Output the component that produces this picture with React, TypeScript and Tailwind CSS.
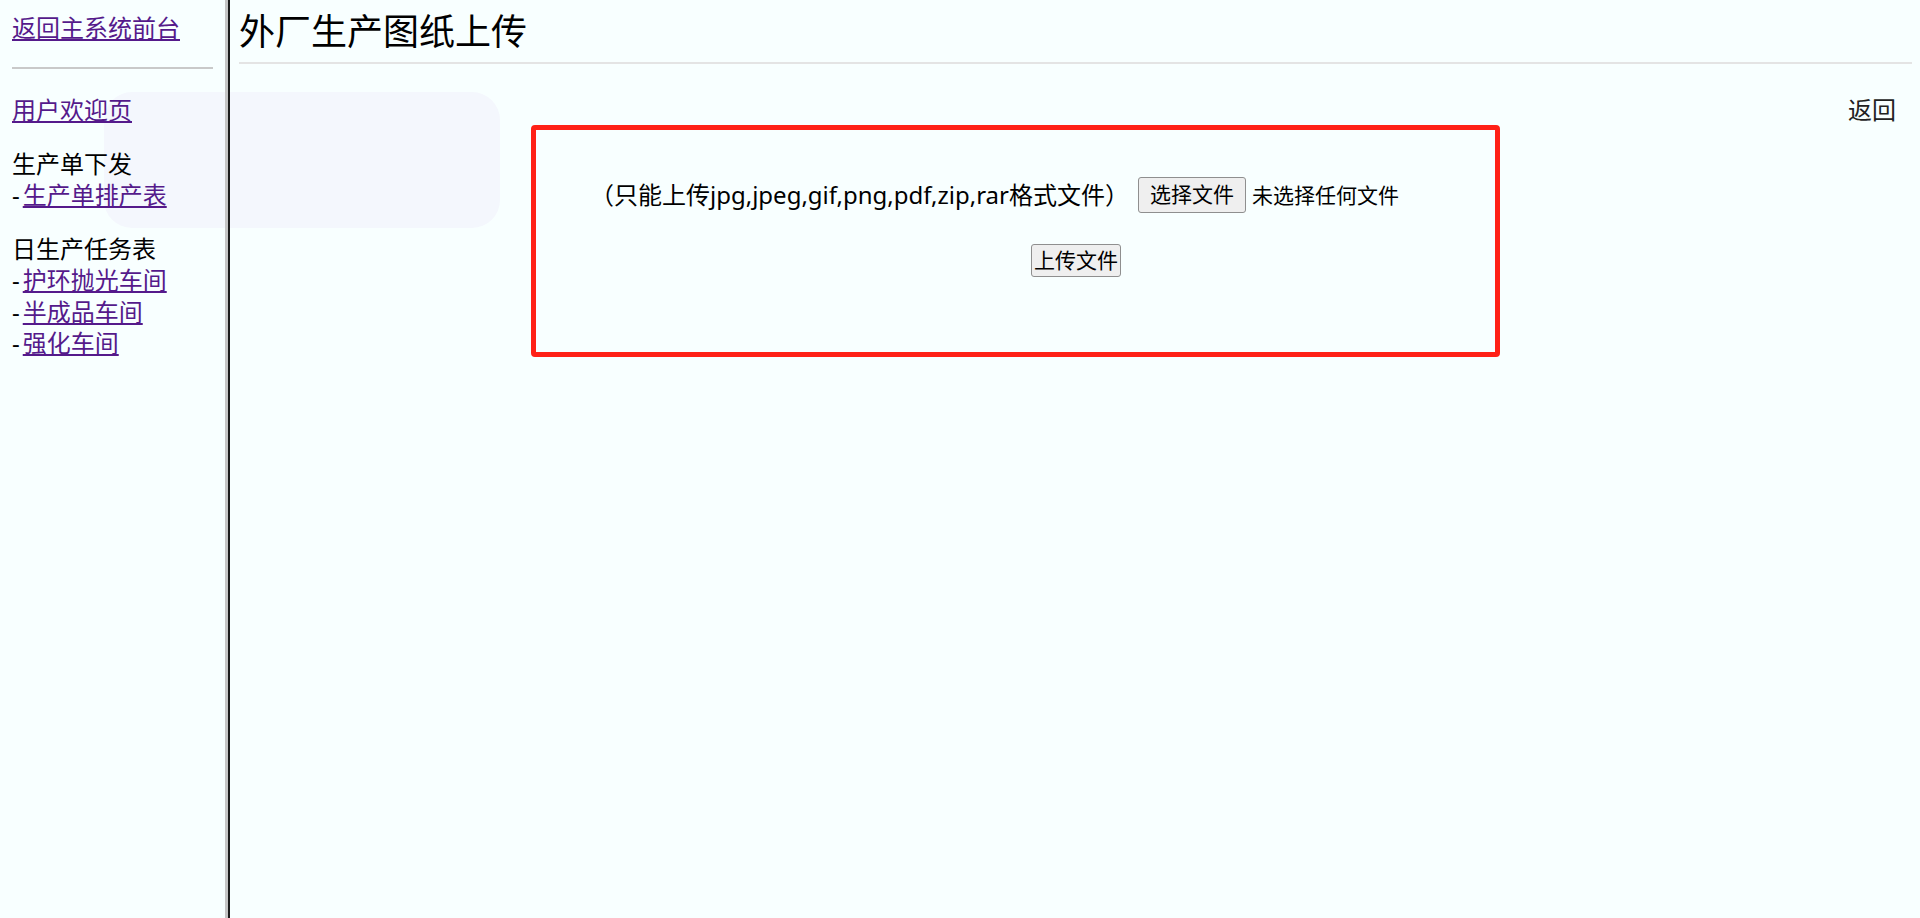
const Watermark = () => {
  return (
    <div className="pointer-events-none absolute left-[104px] top-[92px] h-[136px] w-[396px] rounded-[28px] bg-[#f4f7fd]" />
  )
}

const Sidebar = () => {
  const linkClass = 'text-[#551a8b] underline'
  const subLink = 'ml-[3px] text-[#551a8b] underline'
  return (
    <aside className="relative w-[225px] shrink-0 px-3 pt-3 text-[24px] leading-[31.5px]">
      <div>
        <a href="#" className={linkClass}>
          返回主系统前台
        </a>
      </div>
      <div className="mt-[23.5px] h-[2px] bg-[#c9c9c9]" />
      <div className="mt-[25px]">
        <a href="#" className={linkClass}>
          用户欢迎页
        </a>
      </div>
      <div className="mt-[22px]">
        <div>生产单下发</div>
        <div>
          -<a href="#" className={subLink}>生产单排产表</a>
        </div>
      </div>
      <div className="mt-[22px]">
        <div>日生产任务表</div>
        <div>
          -<a href="#" className={subLink}>护环抛光车间</a>
        </div>
        <div>
          -<a href="#" className={subLink}>半成品车间</a>
        </div>
        <div>
          -<a href="#" className={subLink}>强化车间</a>
        </div>
      </div>
    </aside>
  )
}

const UploadBox = () => {
  return (
    <div className="ml-[292px] h-[232px] w-[969px] rounded-[4px] border-[5px] border-[#ff2117] pt-[47px]">
      <div className="flex items-center pl-[54px] text-[24px] leading-[32px]">
        <span>（只能上传jpg,jpeg,gif,png,pdf,zip,rar格式文件）</span>
        <button className="ml-[9px] h-[36px] w-[108px] rounded-[3px] border border-[#8f8f8f] bg-[#efefef] text-[21px] leading-none">
          选择文件
        </button>
        <span className="ml-[6px] text-[21px]">未选择任何文件</span>
      </div>
      <button className="ml-[495px] mt-[31px] block h-[33px] w-[90px] rounded-[3px] border border-[#8f8f8f] bg-[#efefef] text-[21px] leading-none">
        上传文件
      </button>
    </div>
  )
}

export default function App() {
  return (
    <div className="relative flex h-[918px] w-full overflow-hidden bg-[#f8ffff] font-['Noto_Sans','Noto_Sans_CJK_SC',sans-serif] text-black">
      <Watermark />
      <Sidebar />
      <div className="relative w-[3px] shrink-0 bg-[#c4c4c4]" />
      <div className="relative w-[2px] shrink-0 bg-[#1c1c1c]" />
      <main className="relative flex-1 pl-[9px] pr-2 pt-2">
        <h1 className="text-[36px] font-normal leading-[48px]">外厂生产图纸上传</h1>
        <div className="mt-[6px] h-[2px] bg-[#e4e4e4]" />
        <div className="mt-[31px] pr-4 text-right text-[24px] leading-[29.5px] text-[#222]">返回</div>
        <UploadBox />
      </main>
    </div>
  )
}
